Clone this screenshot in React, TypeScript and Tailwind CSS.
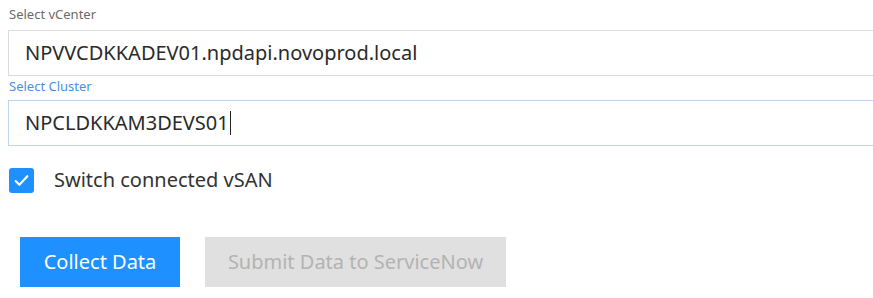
import { useState } from 'react'

export default function App() {
  const [vsan, setVsan] = useState(true)

  return (
    <div className="h-[298px] w-[873px] overflow-hidden bg-white font-['Noto_Sans',sans-serif]">
      <div className="pl-2 pt-[5px]">
        {/* vCenter */}
        <label className="block h-[25px] pl-px text-[13px] leading-[18px] text-[#6b6b6b]">Select vCenter</label>
        <div className="flex h-[46px] w-[900px] items-center border border-[#dcdcdc] pl-4 text-[20px] text-[#2a2a2a]">
          NPVVCDKKADEV01.npdapi.novoprod.local
        </div>

        {/* Cluster */}
        <label className="block h-[24px] pl-px pt-[1px] text-[13px] leading-[18px] text-[#4a8fe0]">Select Cluster</label>
        <div className="flex h-[46px] w-[900px] items-center border border-[#bcd6f0] pl-4 text-[20px] text-[#2a2a2a]">
          NPCLDKKAM3DEVS01
          <span className="ml-px h-[24px] w-px bg-[#222]" />
        </div>

        {/* vSAN switch */}
        <button
          type="button"
          onClick={() => setVsan(!vsan)}
          className="mt-[19px] flex items-center gap-[20px] pl-px"
        >
          <span className="flex h-[25px] w-[25px] items-center justify-center rounded-[3px] bg-[#1e90ff]">
            {vsan && (
              <svg width="17" height="17" viewBox="0 0 16 16" fill="none">
                <path d="M2.5 8.5l3.5 3.5 7.5-8" stroke="white" strokeWidth="2" strokeLinecap="round" strokeLinejoin="round" />
              </svg>
            )}
          </span>
          <span className="text-[20px] text-[#333]">Switch connected vSAN</span>
        </button>

        {/* Actions */}
        <div className="mt-[42px] flex gap-[25px] pl-3">
          <button type="button" className="h-[50px] w-[160px] bg-[#1e90ff] text-[20px] text-white">
            Collect Data
          </button>
          <button type="button" disabled className="h-[50px] w-[301px] bg-[#e0e0e0] text-[20px] text-[#b3b3b3]">
            Submit Data to ServiceNow
          </button>
        </div>
      </div>
    </div>
  )
}
